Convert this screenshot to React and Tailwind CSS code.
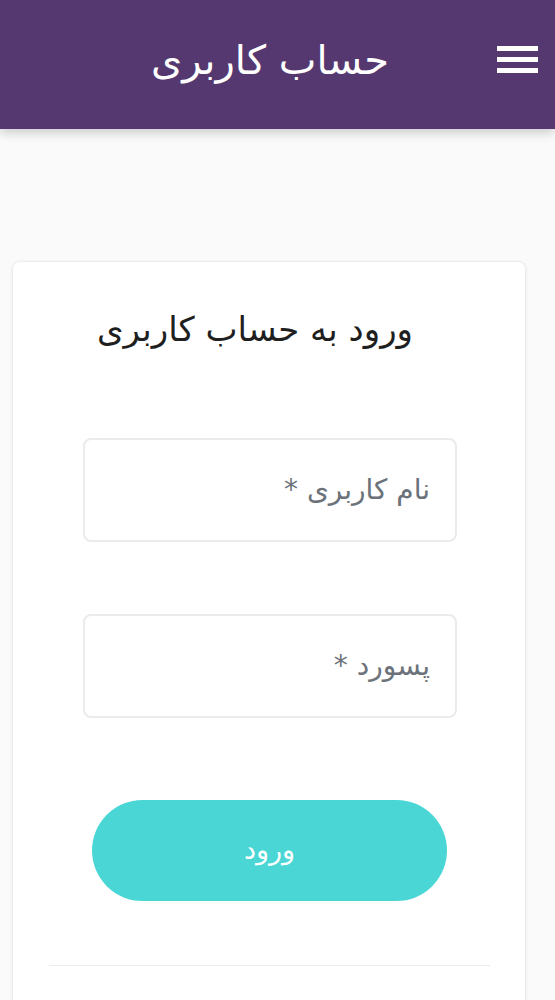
import React from 'react';

const fa = { fontFamily: '"DejaVu Sans", "Noto Sans", sans-serif' };

const Field = ({ label }) => (
  <div className="h-[104px] rounded-lg border-2 border-[#ebebeb] bg-white flex items-center pr-[25px] pl-4">
    <input
      type="text"
      placeholder={label}
      className="w-full bg-transparent text-[28px] text-[#333] placeholder:text-[#6c727a] outline-none text-right"
      style={fa}
      dir="rtl"
    />
  </div>
);

const App = () => {
  return (
    <div className="min-h-screen bg-[#fafafa]" dir="rtl" style={fa}>
      <header className="h-[129px] bg-[#553870] flex items-center shadow-[0_4px_10px_rgba(0,0,0,0.18)]">
        <button className="w-[41px] h-[27px] mr-[17px] mb-[10px] flex flex-col justify-between">
          <span className="block h-[5px] bg-white" />
          <span className="block h-[5px] bg-white" />
          <span className="block h-[5px] bg-white" />
        </button>
        <h1 className="flex-1 text-center text-white text-[40px] leading-[50px] pl-[43px] mb-[10px]">حساب کاربری</h1>
      </header>

      <main className="pt-[132px] pb-10">
        <div className="w-[514px] ml-[12px] mr-auto bg-white rounded-lg border border-[#ececec] shadow-[0_1px_4px_rgba(0,0,0,0.06)] overflow-hidden">
          <h2 className="text-center text-[#1f1f1f] text-[34px] leading-[40px] h-[40px] pt-0 mt-[47px] pr-[28px]">ورود به حساب کاربری</h2>

          <div className="pl-[70px] pr-[68px] mt-[89px] flex flex-col gap-[72px]">
            <Field label="نام کاربری *" />
            <Field label="پسورد *" />
          </div>

          <div className="pl-[79px] pr-[78px] mt-[82px]">
            <button className="w-full h-[101px] rounded-full bg-[#4ad6d5] text-white text-[27px]">ورود</button>
          </div>

          <div className="ml-[36px] mr-[35px] mt-[64px] mb-[60px] border-t border-[#ececec]" />
        </div>
      </main>
    </div>
  );
};

export default App;
